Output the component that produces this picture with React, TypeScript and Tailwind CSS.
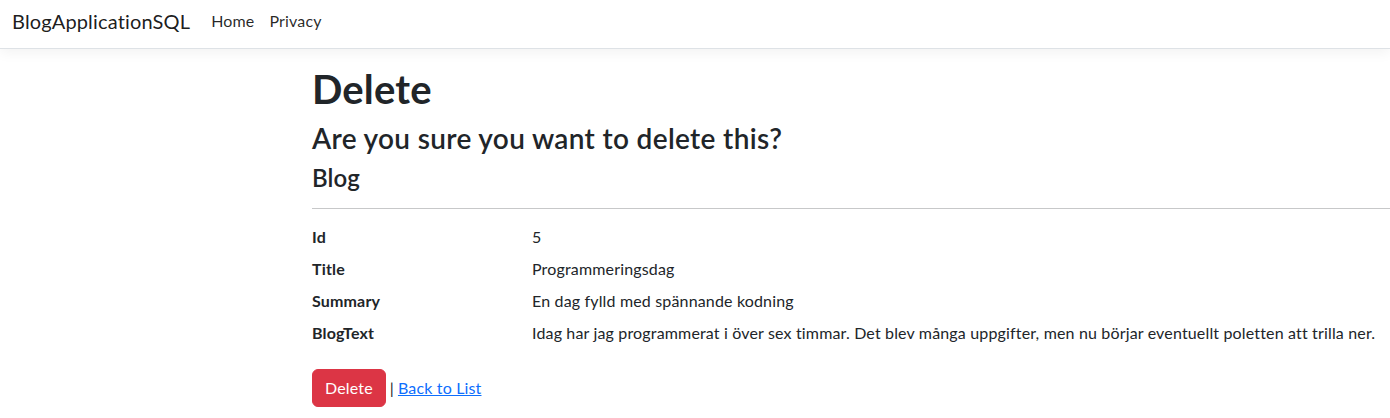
const rows = [
  { label: "Id", value: "5" },
  { label: "Title", value: "Programmeringsdag" },
  { label: "Summary", value: "En dag fylld med spännande kodning" },
  {
    label: "BlogText",
    value:
      "Idag har jag programmerat i över sex timmar. Det blev många uppgifter, men nu börjar eventuellt poletten att trilla ner.",
  },
];

export default function App() {
  return (
    <div className="w-full overflow-hidden bg-white text-[#212529] font-['Lato','Liberation_Sans',sans-serif] text-[16px] leading-6 tracking-[0.01em]">
      <header className="h-[49px] border-b border-[#dee2e6] shadow-[0_4px_12px_rgba(0,0,0,0.05)] mb-4 flex items-center px-3 pb-[6px]">
        <a className="text-[20px] leading-[30px] mr-[13px] text-[rgba(0,0,0,0.9)]">BlogApplicationSQL</a>
        <nav className="flex">
          <a className="pl-2 pr-[7px] text-[rgba(0,0,0,0.85)]">Home</a>
          <a className="px-2 text-[rgba(0,0,0,0.85)]">Privacy</a>
        </nav>
      </header>

      <main className="ml-[300px] w-[1320px] px-3 pb-4">
        <h1 className="text-[40px] leading-[48px] font-bold mb-2">Delete</h1>
        <h3 className="text-[28px] leading-[34px] font-semibold tracking-[0.012em] mb-2">
          Are you sure you want to delete this?
        </h3>
        <div>
          <h4 className="text-[24px] leading-[29px] font-semibold">Blog</h4>
          <hr className="my-4 border-t border-[#212529] opacity-25" />
          <dl className="flex flex-wrap mb-4">
            {rows.map((r) => (
              <div key={r.label} className="contents">
                <dt className="w-[220px] font-bold">{r.label}</dt>
                <dd className="w-[1076px] mb-2">{r.value}</dd>
              </div>
            ))}
          </dl>
          <form className="flex items-center">
            <button
              type="button"
              className="h-[38px] px-3 rounded-[6px] bg-[#dc3545] text-white border border-[#dc3545]"
            >
              Delete
            </button>
            <span className="ml-1">|</span>
            <a className="ml-1 text-[#0d6efd] underline">Back to List</a>
          </form>
        </div>
      </main>
    </div>
  );
}
